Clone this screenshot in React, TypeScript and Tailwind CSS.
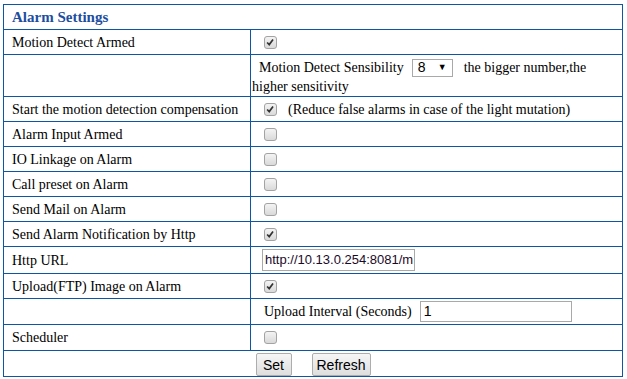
import React from "react";

const serif = { fontFamily: '"Liberation Serif", "Times New Roman", serif' };
const sans = { fontFamily: '"Liberation Sans", Arial, sans-serif' };

function Check({ on }: { on?: boolean }) {
  return (
    <span className="inline-block w-[13px] h-[13px] rounded-[3px] border border-[#a3a3a3] bg-gradient-to-b from-[#f4f4f4] to-[#d9d9d9] align-middle relative">
      {on && (
        <svg viewBox="0 0 13 13" className="absolute inset-0 w-[11px] h-[11px]">
          <path d="M2.5 6.5 L5 9 L9.5 3" fill="none" stroke="#333" strokeWidth="2" />
        </svg>
      )}
    </span>
  );
}

function Row({ label, children, h = "h-[25px]" }: { label?: string; children?: React.ReactNode; h?: string }) {
  return (
    <tr className={h}>
      <td className="border border-[#0b57a4] pl-[8px] pr-1 text-[14px] text-black align-middle">{label}</td>
      <td className="border border-[#0b57a4] pl-[1px] text-[14px] text-black align-middle">{children}</td>
    </tr>
  );
}

function CheckCell({ on, children }: { on?: boolean; children?: React.ReactNode }) {
  return (
    <div className="flex items-center pl-[12px]">
      <Check on={on} />
      {children}
    </div>
  );
}

export default function App() {
  return (
    <div className="w-[627px] h-[379px] bg-white pl-[3px] pt-[4px]" style={serif}>
      <table className="w-[620px] border-collapse table-fixed border border-[#0b57a4]">
        <colgroup>
          <col className="w-[247px]" />
          <col />
        </colgroup>
        <tbody>
          <tr className="h-[25px]">
            <td colSpan={2} className="border border-[#0b57a4] pl-[8px] text-[15px] font-bold text-[#1c4e9f]">
              Alarm Settings
            </td>
          </tr>
          <Row label="Motion Detect Armed">
            <CheckCell on />
          </Row>
          <Row h="h-[42px]">
            <div className="flex items-center h-[21px] pl-[7px] pt-[3px]">
              <span>Motion Detect Sensibility</span>
              <span className="ml-[8px] w-[41px] h-[18px] border border-[#a9a9a9] flex items-center justify-between px-[5px] text-[14px]" style={sans}>
                <span>8</span>
                <span className="text-[9px]">▼</span>
              </span>
              <span className="ml-[11px]">the bigger number,the</span>
            </div>
            <div className="h-[19px] leading-[20px]">higher sensitivity</div>
          </Row>
          <Row label="Start the motion detection compensation">
            <CheckCell on>
              <span className="ml-[11px]">(Reduce false alarms in case of the light mutation)</span>
            </CheckCell>
          </Row>
          <Row label="Alarm Input Armed">
            <CheckCell />
          </Row>
          <Row label="IO Linkage on Alarm">
            <CheckCell />
          </Row>
          <Row label="Call preset on Alarm">
            <CheckCell />
          </Row>
          <Row label="Send Mail on Alarm">
            <CheckCell />
          </Row>
          <Row label="Send Alarm Notification by Http">
            <CheckCell on />
          </Row>
          <Row label="Http URL" h="h-[27px]">
            <div className="pl-[10px]">
              <div className="w-[153px] h-[22px] border border-[#a9a9a9] whitespace-nowrap pl-[2px] leading-[20px] text-[13px] text-[#1a0a2a]" style={sans}>
                http://10.13.0.254:8081/m
              </div>
            </div>
          </Row>
          <Row label="Upload(FTP) Image on Alarm">
            <CheckCell on />
          </Row>
          <Row h="h-[26px]">
            <div className="flex items-center pl-[12px]">
              <span>Upload Interval (Seconds)</span>
              <div className="ml-[8px] w-[152px] h-[21px] border border-[#a9a9a9] pl-[3px] leading-[19px] text-[14px]" style={sans}>
                1
              </div>
            </div>
          </Row>
          <Row label="Scheduler" h="h-[26px]">
            <CheckCell />
          </Row>
          <tr className="h-[25px]">
            <td colSpan={2} className="border border-[#0b57a4] align-top">
              <div className="flex justify-center gap-[20px] pt-[2px]" style={sans}>
                <button className="w-[36px] h-[23px] border border-[#adadad] rounded-[2px] bg-gradient-to-b from-[#f6f6f6] to-[#dedede] text-[14px] text-black leading-none">
                  Set
                </button>
                <button className="w-[59px] h-[23px] border border-[#adadad] rounded-[2px] bg-gradient-to-b from-[#f6f6f6] to-[#dedede] text-[14px] text-black leading-none">
                  Refresh
                </button>
              </div>
            </td>
          </tr>
        </tbody>
      </table>
    </div>
  );
}
